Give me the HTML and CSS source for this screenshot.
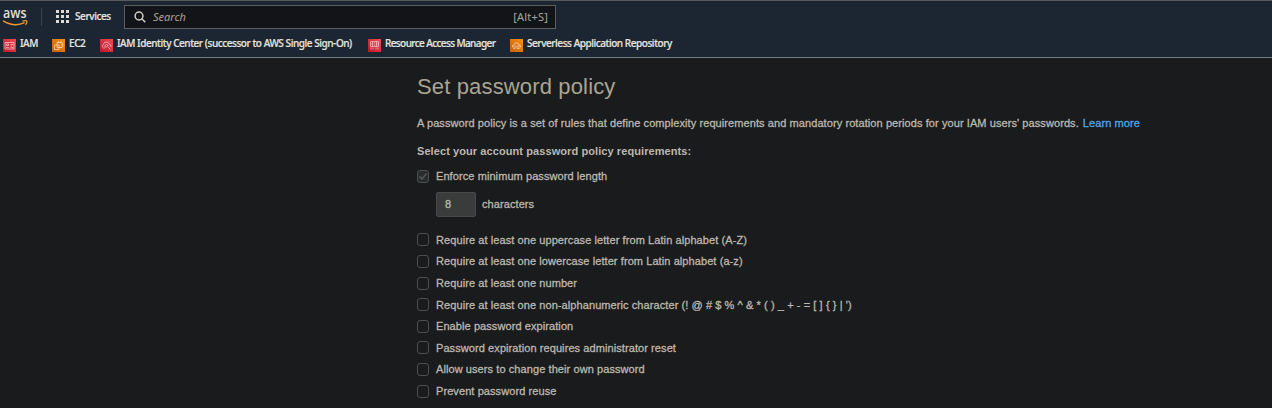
FILE: index.html
```
<!DOCTYPE html>
<html lang="en">
<head>
<meta charset="utf-8">
<title>Set password policy</title>
<link rel="stylesheet" href="styles.css">
</head>
<body>
<header class="header">
  <div class="topbar">
    <svg class="logo" viewBox="0 0 26 18" width="26" height="18" role="img" aria-label="aws">
      <text class="logo-text" x="0" y="10" textLength="23.500" lengthAdjust="spacingAndGlyphs">aws</text>
      <path d="M0 12.800Q11.500 19.500 21.500 14.600" fill="none" stroke="#f39a2b" stroke-width="1.500"/>
      <path d="M19.500 13.100q4.500-1 4.500.3q0 1.800-1.600 3.300" fill="none" stroke="#f39a2b" stroke-width="1.200"/>
    </svg>
    <span class="divider"></span>
    <button class="services">
      <svg width="13" height="13" viewBox="0 0 13 13" fill="#dedbd7"><path d="M0 0h3v3H0zM5 0h3v3H5zM10 0h3v3h-3zM0 5h3v3H0zM5 5h3v3H5zM10 5h3v3h-3zM0 10h3v3H0zM5 10h3v3H5zM10 10h3v3h-3z"/></svg>
      <span class="services-label">Services</span>
    </button>
    <div class="search">
      <svg width="12" height="12" viewBox="0 0 12 12" fill="none" stroke="#d0cdc8" stroke-width="1.500"><circle cx="5" cy="5" r="3.900"/><path d="M7.800 7.800L11.300 11.300"/></svg>
      <span class="search-text">Search</span>
      <span class="shortcut">[Alt+S]</span>
    </div>
  </div>
  <nav class="favorites">
    <a class="fav iam"><svg class="tile red" viewBox="0 0 13 13"><path d="M2 3.500h9v6.500H2zM3.500 5h2v1.500h-2zM3 8.500h3M7.500 5.500H10M7.500 7H9M7.500 8.500H10"/></svg><span>IAM</span></a>
    <a class="fav ec2"><svg class="tile orange" viewBox="0 0 13 13"><path d="M2.500 6h4.500v4.500H2.500zM5 3.500h5V8.500H5zM6.500 2v1.500M9 2v1.500M10 5h1.500M10 7h1.500"/></svg><span>EC2</span></a>
    <a class="fav idc"><svg class="tile red" viewBox="0 0 13 13"><path d="M4 9.500L2.500 8Q1.500 6 3.500 5.500Q4 2.500 6.500 3Q8.500 3 9 5Q11.500 5.500 11 8M5 8V6.500Q6.500 4.500 8 6.500Q8 7.500 6.500 8M8 8l2.500 2.500M4 9.500l2-2"/></svg><span>IAM Identity Center (successor to AWS Single Sign-On)</span></a>
    <a class="fav ram"><svg class="tile red" viewBox="0 0 13 13"><path d="M2.500 2.500h8v5h-8zM4.500 2.500v5M8.500 2.500v5M3 10.500V8.500M5 10.500V8.500M8 10.500V8.500M10 10.500V8.500M5.500 4h2M5.500 6h2M2.500 5h2M8.500 5h2"/></svg><span>Resource Access Manager</span></a>
    <a class="fav sar"><svg class="tile orange" viewBox="0 0 13 13"><path d="M2.500 8Q2 6 4 5.800Q4.500 3.500 6.500 4Q8.500 3.500 9 6Q11 6 10.500 8zM4.500 6.500h1M7.500 6.500h1M3.500 9.500h2M7 9.500h2.500"/></svg><span>Serverless Application Repository</span></a>
  </nav>
</header>
<main class="content">
  <h1 class="title">Set password policy</h1>
  <p class="intro"><span class="intro-text">A password policy is a set of rules that define complexity requirements and mandatory rotation periods for your IAM users' passwords.</span> <a class="learn">Learn more</a></p>
  <h2 class="subtitle">Select your account password policy requirements:</h2>
  <div class="option first"><span class="box checked"><svg width="10" height="11" viewBox="0 0 10 11"><path d="M1.500 5.500l2.500 2.500L8.500 2.500" fill="none" stroke="#505253" stroke-width="1.800"/></svg></span><span>Enforce minimum password length</span></div>
  <div class="length"><span class="number">8</span><span>characters</span></div>
  <div class="options">
    <label class="option"><span class="box"></span><span>Require at least one uppercase letter from Latin alphabet (A-Z)</span></label>
    <label class="option"><span class="box"></span><span>Require at least one lowercase letter from Latin alphabet (a-z)</span></label>
    <label class="option"><span class="box"></span><span>Require at least one number</span></label>
    <label class="option"><span class="box"></span><span>Require at least one non-alphanumeric character (! @ # $ % ^ &amp; * ( ) _ + - = [ ] { } | ')</span></label>
    <label class="option"><span class="box"></span><span>Enable password expiration</span></label>
    <label class="option"><span class="box"></span><span>Password expiration requires administrator reset</span></label>
    <label class="option"><span class="box"></span><span>Allow users to change their own password</span></label>
    <label class="option"><span class="box"></span><span>Prevent password reuse</span></label>
  </div>
</main>
</body>
</html>
```
FILE: styles.css
```
* { box-sizing: border-box; }
body {
  margin: 0;
  height: 408px;
  overflow: hidden;
  background: #191b1c;
  color: #bdb7af;
  font-family: "Liberation Sans", Arial, sans-serif;
  font-size: 11px;
}
.header {
  height: 58px;
  border-top: 1px solid #57595b;
  border-bottom: 1px solid #77797a;
  background: #1c2632;
  color: #e6e3df;
  font-family: "Noto Sans", sans-serif;
}
.topbar { display: flex; align-items: center; height: 31px; padding-left: 3px; }
.logo { overflow: visible; }
.logo-text { font: 600 14px "Open Sans", sans-serif; fill: #e2dfda; }
.divider { width: 1px; height: 18px; margin-left: 12px; background: #3b4249; }
.services { display: flex; align-items: center; gap: 6px; width: 82px; padding: 0 0 0 14px; border: 0; background: none; color: inherit; font: 500 10px "Noto Sans", sans-serif; }
.services-label { margin-top: -2px; white-space: nowrap; letter-spacing: -.4px; -webkit-text-stroke: .2px currentColor; }
.search { display: flex; align-items: center; width: 432px; height: 24px; padding: 0 7px 0 9px; border: 1px solid #5c5f61; background: #131418; color: #aaa49a; }
.search-text { margin-left: 7px; font-size: 11px; font-style: italic; }
.shortcut { margin-left: auto; font-size: 11px; letter-spacing: .2px; }
.favorites { display: flex; height: 25px; padding: 0 0 0 3px; }
.fav { display: flex; align-items: flex-start; gap: 4px; flex: none; white-space: nowrap; font-size: 10px; font-weight: 500; line-height: 13px; padding-top: 5px; letter-spacing: -.44px; -webkit-text-stroke: .2px currentColor; }
.tile { width: 13px; height: 13px; margin-top: 2px; flex: none; }
.tile path { fill: none; stroke: #fff; stroke-width: .7; opacity: .75; }
.red { background: linear-gradient(45deg, #bd1525, #f04b55); }
.orange { background: linear-gradient(45deg, #cb5d08, #f39216); }
.iam { width: 49px; }
.ec2 { width: 48px; }
.idc { width: 268px; }
.ram { width: 142px; letter-spacing: -.6px; }
.content { padding: 16px 0 0 417px; letter-spacing: .083px; -webkit-text-stroke: .3px currentColor; }
.title { margin: 0; font-size: 22px; line-height: 26px; font-weight: 400; letter-spacing: .15px; color: #aaa493; -webkit-text-stroke: 0; }
.intro { display: flex; gap: 4px; margin: 16px 0 0; line-height: 14px; white-space: nowrap; }
.learn { color: #50a5ed; }
.subtitle { margin: 14px 0 0; font-size: 11px; line-height: 14px; font-weight: 700; -webkit-text-stroke: 0; }
.option { display: flex; align-items: center; gap: 7px; height: 21.62px; white-space: nowrap; }
.first { height: 14px; margin-top: 11px; }
.box { width: 12px; height: 13px; flex: none; border: 1px solid #4c4e50; border-radius: 3px; }
.checked { display: grid; place-items: center; background: #292c2d; }
.length { display: flex; align-items: center; gap: 6px; margin: 9px 0 0 19px; height: 25px; line-height: 12px; padding-bottom: 1px; }
.number { width: 40px; height: 25px; margin-bottom: -1px; padding-left: 8px; border: 1px solid #45494b; border-radius: 2px; background: #3a3b3b; line-height: 23px; }
.options { margin-top: 12px; }
```
